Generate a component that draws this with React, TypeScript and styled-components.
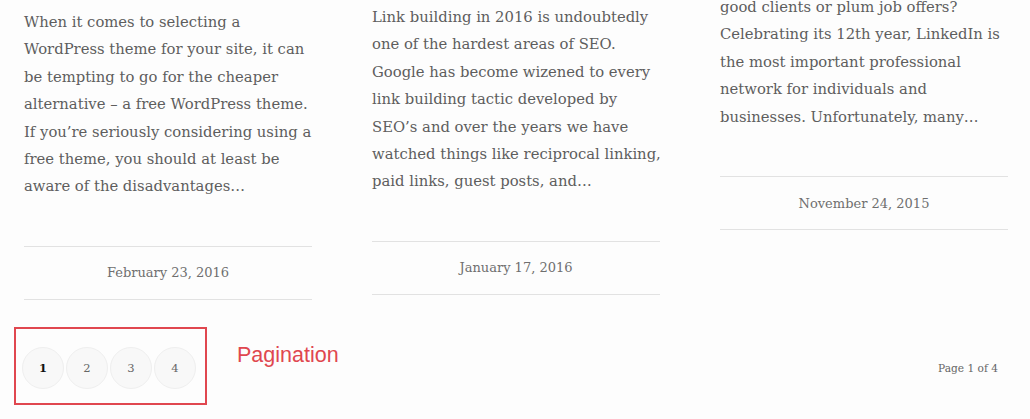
import styled, { createGlobalStyle } from "styled-components"

interface Post {
  lines: string[]
  date: string
  offset: number
}

const posts: Post[] = [
  {
    offset: 8,
    date: "February 23, 2016",
    lines: [
      "When it comes to selecting a",
      "WordPress theme for your site, it can",
      "be tempting to go for the cheaper",
      "alternative – a free WordPress theme.",
      "If you’re seriously considering using a",
      "free theme, you should at least be",
      "aware of the disadvantages…",
    ],
  },
  {
    offset: 3,
    date: "January 17, 2016",
    lines: [
      "Link building in 2016 is undoubtedly",
      "one of the hardest areas of SEO.",
      "Google has become wizened to every",
      "link building tactic developed by",
      "SEO’s and over the years we have",
      "watched things like reciprocal linking,",
      "paid links, guest posts, and…",
    ],
  },
  {
    offset: -7,
    date: "November 24, 2015",
    lines: [
      "good clients or plum job offers?",
      "Celebrating its 12th year, LinkedIn is",
      "the most important professional",
      "network for individuals and",
      "businesses. Unfortunately, many…",
    ],
  },
]

const pages = [1, 2, 3, 4]

const GlobalStyle = createGlobalStyle`
  html, body {
    margin: 0;
    padding: 0;
    background: #fdfdfd;
    overflow: hidden;
  }
  body {
    font-family: "DejaVu Serif", "Liberation Serif", serif;
  }
`

function App (): JSX.Element {
  return (
    <Page>
      <GlobalStyle />
      <Grid>
        {posts.map(post => (
          <Article key={post.date} $offset={post.offset}>
            <Excerpt>
              {post.lines.map(line => <Line key={line}>{line}</Line>)}
            </Excerpt>
            <Meta>{post.date}</Meta>
          </Article>
        ))}
      </Grid>
      <Footer>
        <Highlight>
          {pages.map(n => (
            <PageDot key={n} $current={n === 1}>{n}</PageDot>
          ))}
        </Highlight>
        <Label>Pagination</Label>
        <PageCount>Page 1 of 4</PageCount>
      </Footer>
    </Page>
  )
}

const Page = styled.div`
  width: 1030px;
  height: 419px;
  overflow: hidden;
  box-sizing: border-box;
  padding: 0 22px 0 24px;
`

const Grid = styled.div`
  display: grid;
  grid-template-columns: repeat(3, 288px);
  column-gap: 60px;
  align-items: start;
`

const Article = styled.article<{ $offset: number }>`
  display: flex;
  flex-direction: column;
  margin-top: ${props => props.$offset}px;
`

const Excerpt = styled.div`
  font-size: 14.8px;
  line-height: 27.4px;
  color: #5e5e5e;
  margin-bottom: 46px;
`

const Line = styled.span`
  display: block;
  white-space: nowrap;
`

const Meta = styled.div`
  border-top: 1px solid #e2e2e2;
  border-bottom: 1px solid #e2e2e2;
  height: 52px;
  display: flex;
  align-items: center;
  justify-content: center;
  font-size: 13px;
  color: #6f6f6f;
`

const Footer = styled.div`
  display: flex;
  align-items: center;
  margin: 27px 0 0 -10px;
`

const Highlight = styled.div`
  display: flex;
  align-items: center;
  gap: 2px;
  width: 193px;
  height: 78px;
  box-sizing: border-box;
  border: 2px solid #e0474f;
  padding: 0 0 0 6px;
`

const PageDot = styled.span<{ $current: boolean }>`
  width: 42px;
  height: 42px;
  border-radius: 50%;
  background: #f8f8f8;
  border: 1px solid #efefef;
  box-sizing: border-box;
  display: flex;
  align-items: center;
  justify-content: center;
  margin-top: 4px;
  font-size: 11.5px;
  font-weight: ${props => props.$current ? 700 : 400};
  color: ${props => props.$current ? "#111" : "#666"};
`

const Label = styled.span`
  font-family: "Liberation Sans", Arial, sans-serif;
  font-size: 21.5px;
  color: #e0474f;
  margin: 0 0 20px 30px;
`

const PageCount = styled.span`
  margin-left: auto;
  font-size: 10.6px;
  color: #666;
  margin-top: 4px;
  margin-right: 10px;
`

export default App
